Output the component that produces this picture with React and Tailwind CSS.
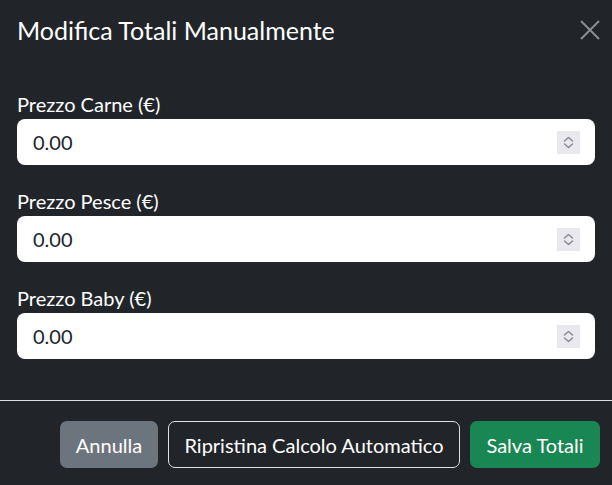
import React, { useState } from 'react';

function Spinner() {
  return (
    <div className="w-[23px] h-[23px] bg-[#e9e9ed] flex items-center justify-center">
      <svg width="11" height="13" viewBox="0 0 11 13" fill="none" stroke="#8a8a96" strokeWidth="1.5" strokeLinecap="round" strokeLinejoin="round">
        <path d="M1.5 5 L5.5 1.5 L9.5 5" />
        <path d="M1.5 8 L5.5 11.5 L9.5 8" />
      </svg>
    </div>
  );
}

function PriceField({ label, value, onChange }) {
  return (
    <div className="mb-[21px]">
      <label className="block text-[20px] leading-[30px] text-white">{label}</label>
      <div className="h-[46px] bg-white rounded-[8px] flex items-center pl-[16px] pr-[15px]">
        <input
          type="text"
          value={value}
          onChange={(e) => onChange(e.target.value)}
          className="flex-1 min-w-0 bg-transparent outline-none text-[20px] text-[#212529]"
        />
        <Spinner />
      </div>
    </div>
  );
}

export default function App() {
  const [prices, setPrices] = useState({ carne: '0.00', pesce: '0.00', baby: '0.00' });

  const update = (key) => (v) => setPrices({ ...prices, [key]: v });

  return (
    <div
      className="w-[612px] h-[485px] bg-[#212529] flex flex-col text-white"
      style={{ fontFamily: 'Lato, sans-serif' }}
    >
      {/* Header */}
      <div className="flex items-center justify-between pl-[17px] pr-[12px] pt-[15px] pb-[44px]">
        <h5 className="text-[25px] leading-[30px]">Modifica Totali Manualmente</h5>
        <button className="w-[20px] h-[20px] flex items-center justify-center text-[#8b8d90]">
          <svg width="20" height="20" viewBox="0 0 20 20" stroke="currentColor" strokeWidth="2">
            <path d="M1 1 L19 19 M19 1 L1 19" />
          </svg>
        </button>
      </div>

      {/* Body */}
      <div className="px-[17px] pb-[20px]">
        <PriceField label="Prezzo Carne (€)" value={prices.carne} onChange={update('carne')} />
        <PriceField label="Prezzo Pesce (€)" value={prices.pesce} onChange={update('pesce')} />
        <PriceField label="Prezzo Baby (€)" value={prices.baby} onChange={update('baby')} />
      </div>

      {/* Footer */}
      <div className="border-t border-[#dee2e6] flex justify-end items-center gap-[10px] pr-[12px] pt-[20px] pb-[18px]">
        <button className="w-[98px] h-[47px] rounded-[7px] bg-[#6c757d] text-[20px] text-white">Annulla</button>
        <button className="w-[292px] h-[47px] rounded-[7px] border border-[#dee2e6] text-[20px] text-white">
          Ripristina Calcolo Automatico
        </button>
        <button className="w-[130px] h-[47px] rounded-[7px] bg-[#198754] text-[20px] text-white">Salva Totali</button>
      </div>
    </div>
  );
}
